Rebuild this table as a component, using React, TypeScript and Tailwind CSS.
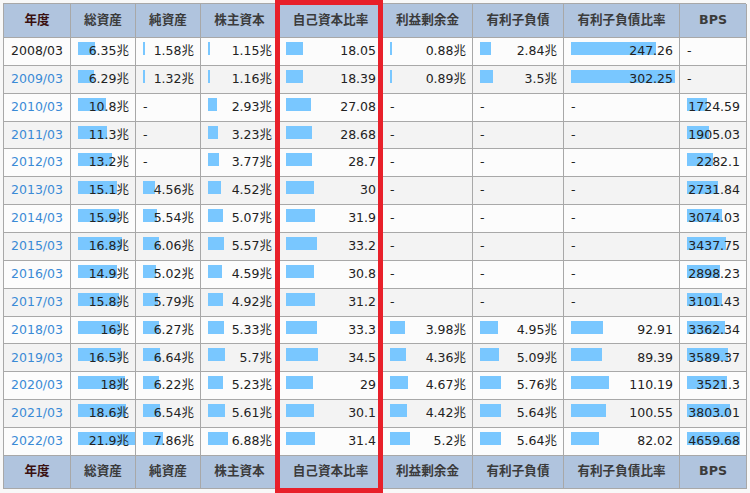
const headers = ['年度', '総資産', '純資産', '株主資本', '自己資本比率', '利益剰余金', '有利子負債', '有利子負債比率', 'BPS'];

// px per unit for the little bars in each numeric column
const scales = [2.6, 2.6, 2.95, 0.92, 3.75, 3.7, 0.345, 0.0114];

const rows = [
  ['2008/03', '6.35兆', '1.58兆', '1.15兆', '18.05', '0.88兆', '2.84兆', '247.26', '-'],
  ['2009/03', '6.29兆', '1.32兆', '1.16兆', '18.39', '0.89兆', '3.5兆', '302.25', '-'],
  ['2010/03', '10.8兆', '-', '2.93兆', '27.08', '-', '-', '-', '1724.59'],
  ['2011/03', '11.3兆', '-', '3.23兆', '28.68', '-', '-', '-', '1905.03'],
  ['2012/03', '13.2兆', '-', '3.77兆', '28.7', '-', '-', '-', '2282.1'],
  ['2013/03', '15.1兆', '4.56兆', '4.52兆', '30', '-', '-', '-', '2731.84'],
  ['2014/03', '15.9兆', '5.54兆', '5.07兆', '31.9', '-', '-', '-', '3074.03'],
  ['2015/03', '16.8兆', '6.06兆', '5.57兆', '33.2', '-', '-', '-', '3437.75'],
  ['2016/03', '14.9兆', '5.02兆', '4.59兆', '30.8', '-', '-', '-', '2898.23'],
  ['2017/03', '15.8兆', '5.79兆', '4.92兆', '31.2', '-', '-', '-', '3101.43'],
  ['2018/03', '16兆', '6.27兆', '5.33兆', '33.3', '3.98兆', '4.95兆', '92.91', '3362.34'],
  ['2019/03', '16.5兆', '6.64兆', '5.7兆', '34.5', '4.36兆', '5.09兆', '89.39', '3589.37'],
  ['2020/03', '18兆', '6.22兆', '5.23兆', '29', '4.67兆', '5.76兆', '110.19', '3521.3'],
  ['2021/03', '18.6兆', '6.54兆', '5.61兆', '30.1', '4.42兆', '5.64兆', '100.55', '3803.01'],
  ['2022/03', '21.9兆', '7.86兆', '6.88兆', '31.4', '5.2兆', '5.64兆', '82.02', '4659.68'],
];

const grid = 'grid grid-cols-[67px_65px_65px_78px_104px_90px_91px_116px_67px]';

const barWidth = (text: string, col: number, row: number) => {
  const v = parseFloat(text);
  // the two oldest years draw hairline bars for the small yen columns
  if (row < 2 && (col === 2 || col === 3 || col === 5)) return 2;
  return Math.max(2, v * scales[col - 1]);
};

const HeaderRow = ({ h }: { h: string }) => (
  <div className={grid}>
    {headers.map((label, i) => (
      <div
        key={label}
        className={`${h} flex items-center justify-center border-r border-b border-[#a8a8a8] bg-[#b0c4de] text-[12.6px] font-bold ${i === 0 ? 'text-[#3a1010]' : 'text-[#3b3b3b]'}`}
      >
        {label}
      </div>
    ))}
  </div>
);

export default function App() {
  return (
    <div className="h-[493px] w-[750px] bg-[#f8f8f8] font-['DejaVu_Sans','Noto_Sans_CJK_JP',sans-serif]">
      <div className="relative pl-[3px] pt-[3px]">
        <div className="w-[743px] border-l border-t border-[#a8a8a8]">
          <HeaderRow h="h-[34px]" />
          {rows.map((row, r) => (
            <div key={row[0]} className={`${grid} ${r % 2 === 0 ? 'bg-[#fcfcfc]' : 'bg-[#f3f3f3]'}`}>
              {row.map((cell, c) => {
                if (c === 0) {
                  return (
                    <div
                      key={c}
                      className={`flex h-[27.87px] items-center justify-center border-r border-b border-[#a8a8a8] text-[12.5px] ${r === 0 ? 'text-[#222]' : 'text-[#3a8ad6]'}`}
                    >
                      {cell}
                    </div>
                  );
                }
                if (cell === '-') {
                  return (
                    <div key={c} className="flex h-[27.87px] items-center border-r border-b border-[#a8a8a8] pl-[7px] text-[12.5px] text-[#222]">
                      -
                    </div>
                  );
                }
                return (
                  <div key={c} className="relative flex h-[27.87px] items-center justify-end border-r border-b border-[#a8a8a8] pr-[6px] text-[12.5px] text-[#222]">
                    <span
                      className="absolute left-[7px] top-[4px] h-[13px] bg-[#79c7ff]"
                      style={{ width: barWidth(cell, c, r) }}
                    />
                    <span className="relative">{cell}</span>
                  </div>
                );
              })}
            </div>
          ))}
          <HeaderRow h="h-[33px]" />
        </div>
        {/* highlight round the equity ratio column */}
        <div className="pointer-events-none absolute left-[275px] top-0 h-[493px] w-[108px] border-[5px] border-[#e8202a]" />
      </div>
    </div>
  );
}
